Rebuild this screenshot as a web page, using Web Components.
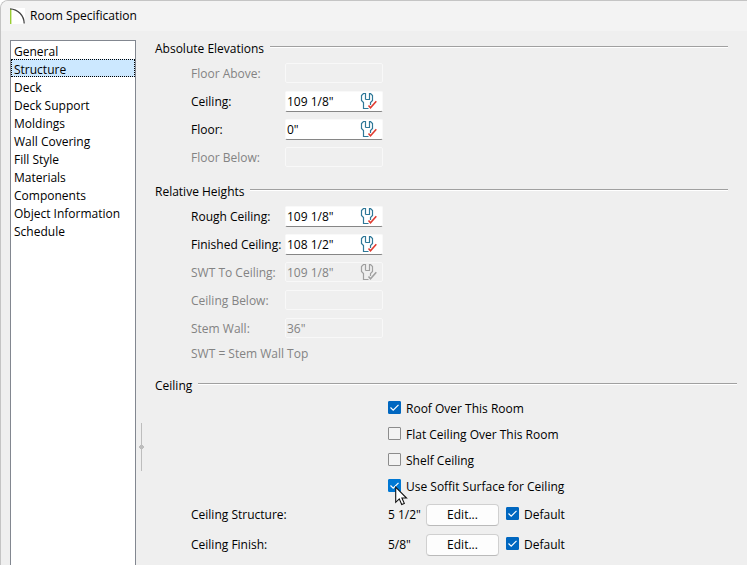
<!DOCTYPE html>
<html lang="en">
<head>
<meta charset="utf-8">
<title>Room Specification</title>
<style>
  html {
    height: 100%;
  }

  body {
    margin: 0;
    height: 100%;
    overflow: hidden;
    background: #fff;
    color: #000;
    font: 12px/16px "Open Sans", "Noto Sans", sans-serif;
  }
</style>
</head>
<body>
<dialog-window heading="Room Specification">
  <page-list slot="nav" selected="Structure" pages="General,Structure,Deck,Deck Support,Moldings,Wall Covering,Fill Style,Materials,Components,Object Information,Schedule"></page-list>
  <split-handle slot="nav"></split-handle>

  <field-group label="Absolute Elevations" inset>
    <length-field label="Floor Above:" disabled></length-field>
    <length-field label="Ceiling:" value='109 1/8"' icon></length-field>
    <length-field label="Floor:" value='0"' icon></length-field>
    <length-field label="Floor Below:" disabled></length-field>
  </field-group>

  <field-group label="Relative Heights" inset>
    <length-field label="Rough Ceiling:" value='109 1/8"' icon></length-field>
    <length-field label="Finished Ceiling:" value='108 1/2"' icon></length-field>
    <length-field label="SWT To Ceiling:" value='109 1/8"' icon disabled></length-field>
    <length-field label="Ceiling Below:" disabled></length-field>
    <length-field label="Stem Wall:" value='36"' disabled></length-field>
    <hint-text>SWT = Stem Wall Top</hint-text>
  </field-group>

  <field-group label="Ceiling">
    <option-stack>
      <tick-box label="Roof Over This Room" checked></tick-box>
      <tick-box label="Flat Ceiling Over This Room"></tick-box>
      <tick-box label="Shelf Ceiling"></tick-box>
      <tick-box label="Use Soffit Surface for Ceiling" checked hot><mouse-pointer></mouse-pointer></tick-box>
    </option-stack>
    <layer-row label="Ceiling Structure:" value='5 1/2"'></layer-row>
    <layer-row label="Ceiling Finish:" value='5/8"'></layer-row>
  </field-group>
</dialog-window>

<script>
class DialogWindow extends HTMLElement {
  constructor() {
    super();
    this.attachShadow({ mode: 'open' });
  }

  connectedCallback() {
    this.shadowRoot.innerHTML = `
      <style>
        :host {
          display: flex;
          flex-direction: column;
          height: 100%;
          box-sizing: border-box;
          border: solid #c4c4c4;
          border-width: 1px 0 0 1px;
          border-top-left-radius: 8px;
          background: #efefef;
          overflow: hidden;
        }

        header {
          display: flex;
          align-items: center;
          gap: 5px;
          height: 30px;
          flex: none;
          padding-left: 9px;
          background: #f3f3f3;
        }

        h1 {
          margin: 0;
          font: inherit;
        }

        .body {
          display: flex;
          flex: 1;
          min-height: 0;
          padding: 9px 10px 0 9px;
        }

        nav {
          display: flex;
          flex: none;
        }

        main {
          display: flex;
          flex-direction: column;
          gap: 15px;
          flex: 1;
          min-width: 0;
          padding-left: 11px;
        }
      </style>
      <header>
        <svg width="15" height="16" viewBox="0 0 15 16" aria-hidden="true">
          <rect width="15" height="16" fill="#fff"/>
          <path d="M.7 1v15" stroke="#9c3" stroke-width="1.4"/>
          <path d="M0 .9C8 1.200 14 7.500 14.200 15.500" fill="none" stroke="#444" stroke-width="1.300"/>
        </svg>
        <h1>${this.getAttribute('heading')}</h1>
      </header>
      <div class="body">
        <nav><slot name="nav"></slot></nav>
        <main><slot></slot></main>
      </div>
    `;
  }
}

class PageList extends HTMLElement {
  constructor() {
    super();
    this.attachShadow({ mode: 'open' });
  }

  connectedCallback() {
    this.render();
    this.shadowRoot.addEventListener('click', (e) => {
      const button = e.target.closest('button');
      if (!button) return;
      this.setAttribute('selected', button.textContent);
      this.render();
    });
  }

  render() {
    const selected = this.getAttribute('selected');
    const items = this.getAttribute('pages').split(',').map((page) => `
      <li><button type="button" ${page === selected ? 'aria-current="page"' : ''}>${page}</button></li>
    `).join('');

    this.shadowRoot.innerHTML = `
      <style>
        :host {
          display: block;
          width: 126px;
          box-sizing: border-box;
          border: 1px solid #828790;
          border-bottom: 0;
          background: #fff;
        }

        ul {
          list-style: none;
          margin: 0;
          padding: 0;
        }

        button {
          display: block;
          width: 100%;
          height: 18px;
          padding: 2px 2px 0;
          border: 1px solid transparent;
          background: none;
          color: inherit;
          font: inherit;
          text-align: left;
        }

        button[aria-current] {
          border: 1px dotted #000;
          background: #cce8ff;
        }
      </style>
      <ul>${items}</ul>
    `;
  }
}

class SplitHandle extends HTMLElement {
  constructor() {
    super();
    this.attachShadow({ mode: 'open' });
    this.shadowRoot.innerHTML = `
      <style>
        :host {
          display: flex;
          align-items: flex-end;
          padding: 0 0 94px 3px;
          cursor: col-resize;
        }

        svg {
          display: block;
        }
      </style>
      <svg width="5" height="48" viewBox="0 0 5 48" aria-hidden="true">
        <path d="M2.500 0v48" stroke="#bdbdbd"/>
        <path d="M1 22h3v1h1v2h-1v1h-3v-1h-1v-2h1z" fill="#bdbdbd"/>
      </svg>
    `;
  }
}

class FieldGroup extends HTMLElement {
  constructor() {
    super();
    this.attachShadow({ mode: 'open' });
  }

  connectedCallback() {
    this.shadowRoot.innerHTML = `
      <style>
        :host {
          display: block;
        }

        :host([inset]) {
          margin-right: 9px;
        }

        .head {
          display: flex;
          align-items: center;
          gap: 6px;
          padding-top: 1px;
          margin-bottom: 6px;
        }

        h2 {
          margin: 0;
          font: inherit;
        }

        .rule {
          flex: 1;
          height: 1px;
          margin-bottom: 4px;
          border-top: 1px solid #a0a0a0;
          background: #fff;
        }

        .rows {
          display: flex;
          flex-direction: column;
          gap: 7px;
          padding-left: 36px;
        }
      </style>
      <section>
        <div class="head">
          <h2>${this.getAttribute('label')}</h2>
          <div class="rule"></div>
        </div>
        <div class="rows"><slot></slot></div>
      </section>
    `;
  }
}

class LengthField extends HTMLElement {
  constructor() {
    super();
    this.attachShadow({ mode: 'open' });
  }

  get disabled() {
    return this.hasAttribute('disabled');
  }

  connectedCallback() {
    const value = (this.getAttribute('value') || '').replace(/"/g, '&quot;');
    const body = this.disabled ? '#a0a0a0' : '#2f7898';
    const tick = this.disabled ? '#a0a0a0' : '#e03c31';

    // wrench with a tick: the value follows the default
    const iconHtml = this.hasAttribute('icon') ? `
      <svg width="17" height="17" viewBox="0 0 17 17" fill="none" aria-hidden="true">
        <path d="M5.500 6.500V.5H3.500L1.500 2.500V7.500L3.500 9.500V15.500H8.500M5.500 6.500H9.500V.5H10.500L12.500 2.500V7.500L10.500 9.500V12" stroke="${body}" stroke-width="1.200"/>
        <path d="M8.500 12.500 10.500 14.800 16.300 8.300" stroke="${tick}" stroke-width="1.600"/>
      </svg>
    ` : '';

    this.shadowRoot.innerHTML = `
      <style>
        :host {
          display: grid;
          grid-template-columns: 94px 98px;
          align-items: center;
          height: 21px;
        }

        :host([disabled]) {
          color: #838383;
        }

        label {
          white-space: nowrap;
        }

        .box {
          display: flex;
          align-items: center;
          height: 21px;
          box-sizing: border-box;
          padding-right: 5px;
          border: 1px solid #f9f9f9;
          border-bottom-color: #868686;
          border-radius: 2px;
          background: #fff;
        }

        :host([disabled]) .box {
          height: 20px;
          border-color: #f8f8f8;
          background: #efefef;
          align-self: start;
        }

        input {
          flex: 1;
          min-width: 0;
          height: 18px;
          padding: 0 1px;
          border: 0;
          outline: 0;
          background: none;
          color: inherit;
          font: inherit;
        }
      </style>
      <label for="value">${this.getAttribute('label')}</label>
      <div class="box">
        <input id="value" type="text" value="${value}" ${this.disabled ? 'disabled' : ''}>
        ${iconHtml}
      </div>
    `;
  }
}

class HintText extends HTMLElement {
  constructor() {
    super();
    this.attachShadow({ mode: 'open' });
    this.shadowRoot.innerHTML = `
      <style>
        :host {
          display: block;
          color: #838383;
        }
      </style>
      <slot></slot>
    `;
  }
}

class OptionStack extends HTMLElement {
  constructor() {
    super();
    this.attachShadow({ mode: 'open' });
    this.shadowRoot.innerHTML = `
      <style>
        :host {
          display: flex;
          flex-direction: column;
          align-items: flex-start;
          gap: 10px;
          padding: 1px 0 1px 197px;
        }
      </style>
      <slot></slot>
    `;
  }
}

class TickBox extends HTMLElement {
  constructor() {
    super();
    this.attachShadow({ mode: 'open' });
  }

  connectedCallback() {
    this.shadowRoot.innerHTML = `
      <style>
        :host {
          display: block;
          position: relative;
        }

        label {
          display: grid;
          grid-template-columns: 13px auto;
          column-gap: 5px;
          white-space: nowrap;
        }

        input {
          grid-area: 1 / 1;
          appearance: none;
          width: 13px;
          height: 13px;
          margin: 0;
          border: 1px solid #8c8c8c;
          border-radius: 1px;
          background: #f3f3f3;
        }

        input:checked {
          border-color: #0067c0;
          background: #0067c0;
        }

        :host([hot]) input:checked {
          border-color: #0078d4;
          background: #0078d4;
        }

        svg {
          grid-area: 1 / 1;
          display: none;
          pointer-events: none;
        }

        input:checked + svg {
          display: block;
        }
      </style>
      <label>
        <input type="checkbox" ${this.hasAttribute('checked') ? 'checked' : ''}>
        <svg width="13" height="13" viewBox="0 0 13 13" aria-hidden="true">
          <path d="M2.500 6.500 5.200 9.100 10.500 3.800" fill="none" stroke="#fff" stroke-width="1.200"/>
        </svg>
        <span>${this.getAttribute('label')}</span>
      </label>
      <slot></slot>
    `;
  }
}

class MousePointer extends HTMLElement {
  constructor() {
    super();
    this.attachShadow({ mode: 'open' });
    this.shadowRoot.innerHTML = `
      <style>
        :host {
          position: absolute;
          left: 7px;
          top: 7px;
          pointer-events: none;
        }

        svg {
          display: block;
        }
      </style>
      <svg width="13" height="20" viewBox="0 0 13 20" aria-hidden="true">
        <path d="M.7 1.200V16.300L4.300 12.900 6.700 18.500 9.300 17.400 6.900 12H11.500Z" fill="#fff" stroke="#111" stroke-width="1.100"/>
      </svg>
    `;
  }
}

class LayerRow extends HTMLElement {
  constructor() {
    super();
    this.attachShadow({ mode: 'open' });
  }

  connectedCallback() {
    this.shadowRoot.innerHTML = `
      <style>
        :host {
          display: grid;
          grid-template-columns: 197px 38px 73px auto;
          justify-content: start;
          align-items: center;
          height: 23px;
        }

        button {
          height: 22px;
          padding: 0;
          border: 1px solid #d0d0d0;
          border-bottom-color: #bababa;
          border-radius: 4px;
          background: #fdfdfd;
          color: inherit;
          font: inherit;
        }

        tick-box {
          margin-left: 7px;
        }
      </style>
      <span>${this.getAttribute('label')}</span>
      <span>${this.getAttribute('value')}</span>
      <button type="button">Edit...</button>
      <tick-box label="Default" checked></tick-box>
    `;
  }
}

customElements.define('dialog-window', DialogWindow);
customElements.define('page-list', PageList);
customElements.define('split-handle', SplitHandle);
customElements.define('field-group', FieldGroup);
customElements.define('length-field', LengthField);
customElements.define('hint-text', HintText);
customElements.define('option-stack', OptionStack);
customElements.define('tick-box', TickBox);
customElements.define('mouse-pointer', MousePointer);
customElements.define('layer-row', LayerRow);
</script>
</body>
</html>
